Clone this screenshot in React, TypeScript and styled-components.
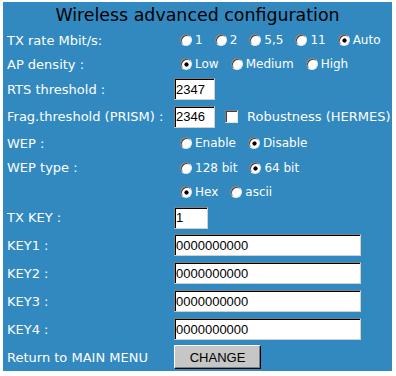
import styled, { createGlobalStyle } from "styled-components";

const GlobalStyle = createGlobalStyle`
  body {
    margin: 0;
    background: #fff;
    font-family: "DejaVu Sans", Verdana, sans-serif;
  }
`;

const Panel = styled.form`
  width: 389px;
  height: 369px;
  margin: 2px 0 0 3px;
  background: #3189bf;
  display: flex;
  flex-direction: column;
`;

const Title = styled.h1`
  margin: 0;
  height: 26px;
  line-height: 26px;
  font-size: 17.4px;
  font-weight: normal;
  color: #000;
  text-align: center;
`;

const Row = styled.div<{ $h: number }>`
  height: ${(p) => p.$h}px;
  display: grid;
  grid-template-columns: 171px 1fr;
  align-items: center;
`;

const Label = styled.span`
  padding-left: 4px;
  color: #fff;
  font-size: 13px;
  white-space: nowrap;
`;

const Field = styled.div`
  display: flex;
  align-items: center;
  gap: 6px;
`;

const Option = styled.label<{ $size?: number }>`
  display: inline-flex;
  align-items: center;
  color: #fff;
  font-size: ${(p) => p.$size ?? 12}px;
  white-space: nowrap;
`;

const Radio = styled.input.attrs({ type: "radio" })`
  appearance: none;
  width: 12px;
  height: 12px;
  margin: 0 3px 0 6px;
  border-radius: 50%;
  border: 1px solid;
  border-color: #808080 #e8e8e8 #e8e8e8 #808080;
  box-shadow: inset 1px 1px 0 #404040;
  background: #fff;

  &:checked {
    background: radial-gradient(circle at 55% 55%, #000 0 1.8px, #fff 2.4px);
  }
`;

const Check = styled.input.attrs({ type: "checkbox" })`
  appearance: none;
  width: 13px;
  height: 13px;
  margin: 0 9px 0 4px;
  border: 1px solid;
  border-color: #808080 #e8e8e8 #e8e8e8 #808080;
  box-shadow: inset 1px 1px 0 #404040;
  background: #fff;
`;

const TextBox = styled.input.attrs({ type: "text" })<{ $w: number }>`
  box-sizing: border-box;
  width: ${(p) => p.$w}px;
  height: 22px;
  margin: 0;
  padding: 0 2px 0 1px;
  border: 1px solid;
  border-color: #808080 #d4d0c8 #d4d0c8 #808080;
  box-shadow: inset 1px 1px 0 #000;
  background: #fff;
  color: #000;
  font-family: "Liberation Sans", Arial, sans-serif;
  font-size: 13px;
  outline: none;
`;

const Button = styled.button`
  box-sizing: border-box;
  width: 87px;
  height: 24px;
  margin: 0;
  padding: 0;
  border: 1px solid;
  border-color: #fff #000 #000 #fff;
  box-shadow: inset -1px -1px 0 #808080;
  background: #c6c6c6;
  color: #000;
  font-family: "Liberation Sans", Arial, sans-serif;
  font-size: 13px;
`;

type Choice = { text: string; on?: boolean };

const Radios = ({ name, choices }: { name: string; choices: Choice[] }) => (
  <Field>
    {choices.map((c) => (
      <Option key={c.text}>
        <Radio name={name} defaultChecked={c.on} />
        {c.text}
      </Option>
    ))}
  </Field>
);

const keys = ["KEY1", "KEY2", "KEY3", "KEY4"];

export default function App() {
  return (
    <>
      <GlobalStyle />
      <Panel onSubmit={(e) => e.preventDefault()}>
        <Title>Wireless advanced configuration</Title>
        <Row $h={24}>
          <Label>TX rate Mbit/s:</Label>
          <Radios
            name="rate"
            choices={[
              { text: "1" },
              { text: "2" },
              { text: "5,5" },
              { text: "11" },
              { text: "Auto", on: true },
            ]}
          />
        </Row>
        <Row $h={24}>
          <Label>AP density :</Label>
          <Radios
            name="density"
            choices={[{ text: "Low", on: true }, { text: "Medium" }, { text: "High" }]}
          />
        </Row>
        <Row $h={26}>
          <Label>RTS threshold :</Label>
          <Field>
            <TextBox $w={41} defaultValue="2347" />
          </Field>
        </Row>
        <Row $h={29}>
          <Label>Frag.threshold (PRISM) :</Label>
          <Field>
            <TextBox $w={41} defaultValue="2346" />
            <Option $size={13}>
              <Check />
              Robustness (HERMES)
            </Option>
          </Field>
        </Row>
        <Row $h={24}>
          <Label>WEP :</Label>
          <Radios name="wep" choices={[{ text: "Enable" }, { text: "Disable", on: true }]} />
        </Row>
        <Row $h={25}>
          <Label>WEP type :</Label>
          <Radios name="wtype" choices={[{ text: "128 bit" }, { text: "64 bit", on: true }]} />
        </Row>
        <Row $h={24}>
          <Label />
          <Radios name="fmt" choices={[{ text: "Hex", on: true }, { text: "ascii" }]} />
        </Row>
        <Row $h={27}>
          <Label>TX KEY :</Label>
          <Field>
            <TextBox $w={34} defaultValue="1" />
          </Field>
        </Row>
        {keys.map((k) => (
          <Row $h={28} key={k}>
            <Label>{k} :</Label>
            <Field>
              <TextBox $w={187} defaultValue="0000000000" />
            </Field>
          </Row>
        ))}
        <Row $h={28}>
          <Label>Return to MAIN MENU</Label>
          <Field>
            <Button type="submit">CHANGE</Button>
          </Field>
        </Row>
      </Panel>
    </>
  );
}
